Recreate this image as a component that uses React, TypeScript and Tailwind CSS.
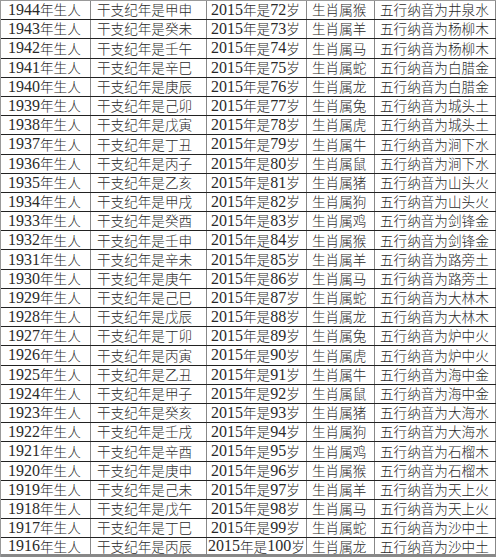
import React from "react";

const branches = ["申","未","午","巳","辰","卯","寅","丑","子","亥","戌","酉"];
const stems = ["甲","癸","壬","辛","庚","己","戊","丁","丙","乙"];
const zodiac = ["猴","羊","马","蛇","龙","兔","虎","牛","鼠","猪","狗","鸡"];
const nayin = [
  "井泉水","杨柳木","杨柳木","白腊金","白腊金","城头土","城头土","涧下水","涧下水","山头火",
  "山头火","剑锋金","剑锋金","路旁土","路旁土","大林木","大林木","炉中火","炉中火","海中金",
  "海中金","大海水","大海水","石榴木","石榴木","天上火","天上火","沙中土","沙中土",
];

const rows = Array.from({ length: 29 }, (_, i) => {
  const year = 1944 - i;
  return [
    `${year}年生人`,
    `干支纪年是${stems[i % 10]}${branches[i % 12]}`,
    `2015年是${72 + i}岁`,
    `生肖属${zodiac[i % 12]}`,
    `五行纳音为${nayin[i]}`,
  ];
});

function Mixed({ text }: { text: string }) {
  const parts = text.split(/(\d+)/).filter((p) => p.length > 0);
  return (
    <>
      {parts.map((p, k) =>
        /^\d+$/.test(p) ? (
          <span key={k} className="text-[16px] font-['Liberation_Serif',serif]">
            {p}
          </span>
        ) : (
          <span key={k} className="text-[13.6px] font-['Noto_Sans_CJK_SC',sans-serif] font-light">
            {p}
          </span>
        )
      )}
    </>
  );
}

const pads = ["pl-[7px]", "pl-[6px]", "pl-[4px]", "pl-[5px]", "pl-[5px]"];

export default function App() {
  return (
    <div className="w-[500px] h-[557px] bg-white overflow-hidden">
      <div className="w-[496px] border-l border-t border-[#999]">
        {rows.map((r, i) => (
          <div
            key={i}
            className={`grid grid-cols-[90px_116px_100px_68px_121px] h-[19.2px] ${
              i === rows.length - 1 ? "border-b-[3px] border-[#888]" : "border-b border-[#222]"
            }`}
          >
            {r.map((c, j) => (
              <div
                key={j}
                className={`flex items-center whitespace-nowrap overflow-visible text-[#2a2a2a] leading-none border-r border-[#888] ${
                  i === rows.length - 1 && j === 2 ? "pl-[1px]" : pads[j]
                }`}
              >
                <Mixed text={c} />
              </div>
            ))}
          </div>
        ))}
      </div>
    </div>
  );
}
